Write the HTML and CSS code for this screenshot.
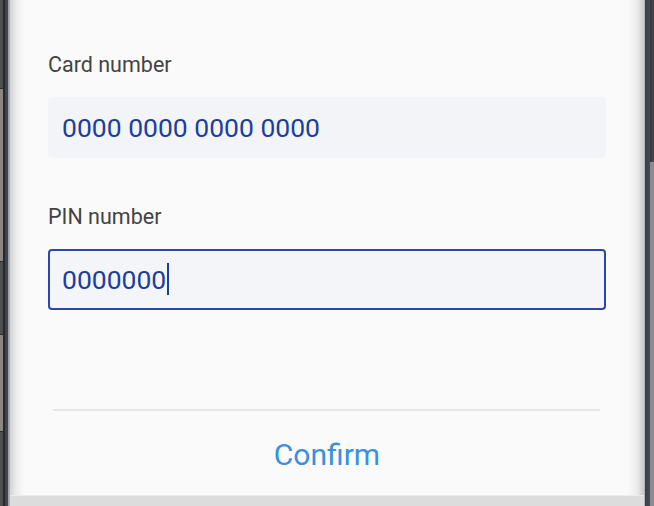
FILE: index.html
```html
<!DOCTYPE html>
<html lang="en">
<head>
    <meta charset="UTF-8">
    <meta name="viewport" content="width=device-width, initial-scale=1.0">
    <title>Card details</title>
    <link rel="stylesheet" href="styles.css">
</head>
<body>
    <div class="phone">
        <div class="bezel bezel-left">
            <span class="key key-volume"></span>
            <span class="key key-bixby"></span>
        </div>

        <main class="screen">
            <section class="form">
                <label class="label" for="card">Card number</label>
                <div class="field" id="card">0000 0000 0000 0000</div>

                <label class="label label-pin" for="pin">PIN number</label>
                <div class="field field-active" id="pin">0000000<span class="caret"></span></div>
            </section>

            <footer class="actions">
                <div class="divider"></div>
                <button class="confirm">Confirm</button>
            </footer>

            <div class="navbar"></div>
        </main>

        <div class="bezel bezel-right">
            <span class="key key-power"></span>
        </div>
    </div>
</body>
</html>
```

FILE: styles.css
```css
html, body {
    margin: 0;
    padding: 0;
    width: 100%;
    height: 100%;
    background: #5a5a5a;
    font-family: Roboto, "Noto Sans", sans-serif;
}

.phone {
    display: flex;
    height: 506px;
}

/* bezels */
.bezel {
    display: flex;
    flex-direction: column;
    width: 10px;
}

.bezel-left {
    background: linear-gradient(to right, #4e4e4e 0, #4e4e4e 3px, #262626 3px, #2a2a2a 5px, #3c3f4c 5px, #434655 8px, #9a9ba4 8px, #b4b4ba 10px);
}

.bezel-right {
    background: linear-gradient(to right, #b5b5bc 0, #b5b5bc 1px, #3a3d49 1px, #454856 6px, #383838 6px, #4a4a4a 10px);
}

.key {
    display: block;
    width: 3px;
    background: #8a8681;
    border-top: 1px solid #2e2e2e;
    border-bottom: 1px solid #2e2e2e;
}

.key-volume {
    margin-top: 88px;
    height: 172px;
}

.key-bixby {
    margin-top: 72px;
    height: 96px;
}

.key-power {
    margin-top: 162px;
    margin-left: 6px;
    width: 4px;
    height: 344px;
    background: #8c8c8c;
    border: none;
}

/* screen */
.screen {
    flex: 1;
    display: flex;
    flex-direction: column;
    background: linear-gradient(to right, #d2d2d2 0, #ececec 6px, #fafafa 14px, #fafafa calc(100% - 16px), #e8e8e8 calc(100% - 6px), #c6c6c6 100%);
}

.form {
    display: flex;
    flex-direction: column;
    padding: 52px 38px 0;
}

.label {
    font-size: 21.5px;
    line-height: 25px;
    color: #434343;
    margin-bottom: 20px;
}

.label-pin {
    margin-top: 46px;
}

.field {
    box-sizing: border-box;
    height: 61px;
    padding: 0 14px;
    border-radius: 4px;
    background: #f3f4f7;
    font-size: 26.5px;
    line-height: 61px;
    color: #1c3e9e;
}

.field-active {
    border: 2px solid #2b47a9;
    line-height: 57px;
    padding-left: 12px;
    background: #f4f5f8;
}

.caret {
    display: inline-block;
    width: 2px;
    height: 32px;
    margin-left: 1px;
    vertical-align: -6px;
    background: #1c3e9e;
}

.actions {
    display: flex;
    flex-direction: column;
    align-items: center;
    margin-top: 99px;
}

.divider {
    align-self: stretch;
    height: 2px;
    margin: 0 44px 0 43px;
    background: #e6e6e6;
}

.confirm {
    margin-top: 26px;
    padding: 0;
    border: none;
    background: none;
    font-family: Roboto, "Noto Sans", sans-serif;
    font-size: 30px;
    line-height: 36px;
    color: #3b8fdd;
    cursor: pointer;
}

.navbar {
    margin-top: auto;
    height: 10px;
    border-top: 1px solid #ececec;
    background: #dcdcdc;
}
```
